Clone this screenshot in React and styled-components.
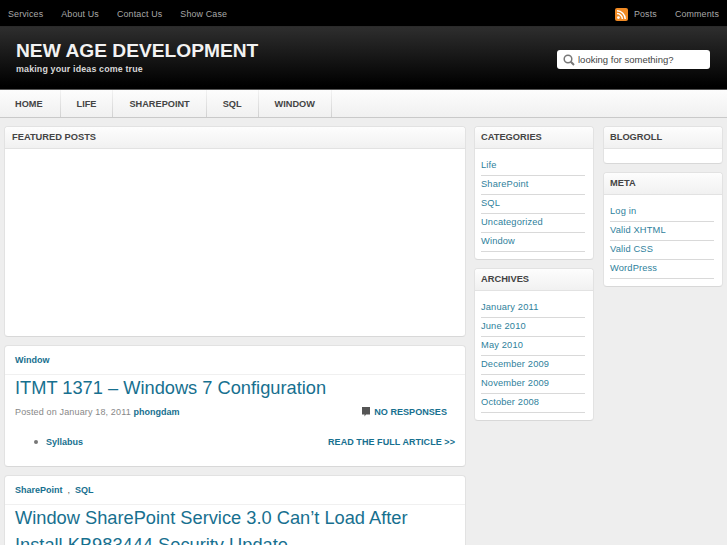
import React from 'react';
import styled, { createGlobalStyle } from 'styled-components';

const Global = createGlobalStyle`
  html, body { margin: 0; padding: 0; height: 545px; overflow: hidden; background: #eeeeee; }
  body { font-family: "Liberation Sans", Arial, sans-serif; font-size: 10px; color: #555; }
  * { box-sizing: border-box; }
`;

const TopBar = styled.div`
  height: 27px; background: #000; border-bottom: 1px solid #2a2a2a;
  display: flex; align-items: center; justify-content: space-between;
  padding: 2px 8px 0 8px; font-size: 8.9px; letter-spacing: 0.15px; color: #aaa;
`;
const TopGroup = styled.div`display: flex; align-items: center; gap: 18px;`;
const TopLink = styled.span`color: #a8a8a8;`;
const RssWrap = styled.span`display: flex; align-items: center; gap: 6px;`;

const Header = styled.header`
  height: 63px; background: linear-gradient(#2e2e2e, #000 95%);
  border-bottom: 1px solid #555;
  display: flex; align-items: flex-start; justify-content: space-between;
  padding: 13px 17px 0 16px;
`;
const Brand = styled.div`display: flex; flex-direction: column;`;
const SiteTitle = styled.div`font-size: 19.2px; line-height: 22px; font-weight: bold; color: #f2f2f2;`;
const Tagline = styled.div`font-size: 8.9px; line-height: 14px; font-weight: bold; color: #d8d8d8; letter-spacing: 0.15px;`;
const Search = styled.div`
  width: 153px; height: 19px; margin-top: 10px; background: #fff; border-radius: 3px;
  display: flex; align-items: center; gap: 3px; padding-left: 6px; font-size: 9.5px; color: #444;
`;

const Nav = styled.nav`
  height: 28px; background: linear-gradient(#fdfdfd, #f0f0f0);
  border-bottom: 1px solid #c9c9c9; display: flex;
`;
const NavItem = styled.div`
  height: 27px; padding: 0 ${p => p.$right || 16}px 0 ${p => p.$left || 16}px;
  border-right: 1px solid; border-image: linear-gradient(#f4f4f4, #d0d0d0) 1;
  display: flex; align-items: center; font-size: 9.2px; font-weight: bold; color: #444;
`;

const Main = styled.main`
  display: grid; grid-template-columns: 462px 120px 121px; column-gap: 8px;
  padding: 8px 4px 0; align-items: start;
`;
const Column = styled.div`
  display: flex; flex-direction: column; gap: 8px;
  margin-left: ${p => (p.$inset ? '1px' : '0')};
`;
const Card = styled.section`
  background: #fff; border: 1px solid #e2e2e2; border-bottom-color: #d8d8d8; border-radius: 4px; overflow: hidden;
`;
const CardHead = styled.div`
  height: 22px; padding: 0 ${p => p.$pad || 6}px 1px; display: flex; align-items: center;
  background: linear-gradient(#fdfdfd, #f1f1f1); border-bottom: 1px solid #e2e2e2;
  font-size: 9.3px; font-weight: bold; color: #444;
`;
const Featured = styled.div`height: 187px;`;
const WidgetList = styled.ul`list-style: none; margin: 0; padding: 8px 8px 7px 6px;`;
const WidgetItem = styled.li`
  height: 19px; padding-bottom: 2px; border-bottom: 1px solid #d9d9d9; display: flex; align-items: center;
  font-size: 9.3px; letter-spacing: 0.15px; color: #2f7f9c;
`;
const EmptyBody = styled.div`height: 14px;`;

const PostCats = styled.div`
  height: 29px; padding: 0 10px; border-bottom: 1px solid #f0f0f0; display: flex; align-items: center;
  gap: 5px; font-size: 9px; font-weight: bold; color: #17708f;
`;
const Comma = styled.span`color: #555; font-weight: normal;`;
const PostBody = styled.div`padding: 0 10px;`;
const PostTitle = styled.h2`
  margin: -1px 0 0; font-size: 18.25px; line-height: 27px; font-weight: normal; color: #17708f;
`;
const MetaRow = styled.div`
  display: flex; justify-content: space-between; align-items: center;
  margin-top: 4px; height: 14px; padding-right: 8px; font-size: 9px; letter-spacing: 0.15px; color: #888;
`;
const Author = styled.b`color: #17708f; letter-spacing: 0;`;
const Responses = styled.span`display: flex; align-items: center; gap: 4px; font-weight: bold; color: #17708f; letter-spacing: 0; font-size: 9.1px;`;
const ExcerptRow = styled.div`
  display: flex; justify-content: space-between; align-items: center;
  margin-top: 16px; height: 14px; font-size: 9px; font-weight: bold; color: #17708f;
`;
const Excerpt = styled.ul`list-style: none; margin: 0; padding: 0 0 0 19px;`;
const ExcerptItem = styled.li`display: flex; align-items: center; gap: 8px;`;
const Dot = styled.span`width: 4px; height: 4px; border-radius: 50%; background: #777;`;
const ReadMore = styled.span`letter-spacing: 0.06px;`;
const PostFoot = styled.div`height: 17px;`;

const Rss = () => (
  <svg width="13" height="13" viewBox="0 0 13 13">
    <rect width="13" height="13" rx="2" fill="#f08a24" />
    <circle cx="3.4" cy="9.6" r="1.4" fill="#fff" />
    <path d="M2 5.6a5.4 5.4 0 0 1 5.400 5.400M2 2.800A8.200 8.200 0 0 1 10.200 11" fill="none" stroke="#fff" strokeWidth="1.5" />
  </svg>
);
const Magnifier = () => (
  <svg width="12" height="12" viewBox="0 0 12 12">
    <circle cx="5" cy="5" r="3.8" fill="none" stroke="#777" strokeWidth="1.5" />
    <path d="M7.800 7.800 11 11" stroke="#777" strokeWidth="2" />
  </svg>
);
const Bubble = () => (
  <svg width="8" height="10" viewBox="0 0 8 10">
    <path d="M0 0h8v7.500H4L2.500 9.500V7.500H0z" fill="#555" />
  </svg>
);

const Widget = ({ title, items }) => (
  <Card>
    <CardHead>{title}</CardHead>
    {items.length ? (
      <WidgetList>{items.map(i => <WidgetItem key={i}>{i}</WidgetItem>)}</WidgetList>
    ) : <EmptyBody />}
  </Card>
);

export default function App() {
  return (
    <>
      <Global />
      <TopBar>
        <TopGroup>
          {['Services', 'About Us', 'Contact Us', 'Show Case'].map(t => <TopLink key={t}>{t}</TopLink>)}
        </TopGroup>
        <TopGroup>
          <RssWrap><Rss /><TopLink>Posts</TopLink></RssWrap>
          <TopLink>Comments</TopLink>
        </TopGroup>
      </TopBar>
      <Header>
        <Brand>
          <SiteTitle>NEW AGE DEVELOPMENT</SiteTitle>
          <Tagline>making your ideas come true</Tagline>
        </Brand>
        <Search><Magnifier />looking for something?</Search>
      </Header>
      <Nav>
        <NavItem $left={15} $right={17}>HOME</NavItem>
        <NavItem>LIFE</NavItem>
        <NavItem>SHAREPOINT</NavItem>
        <NavItem>SQL</NavItem>
        <NavItem>WINDOW</NavItem>
      </Nav>
      <Main>
        <Column>
          <Card>
            <CardHead $pad={7}>FEATURED POSTS</CardHead>
            <Featured />
          </Card>
          <Card>
            <PostCats>Window</PostCats>
            <PostBody>
              <PostTitle>ITMT 1371 – Windows 7 Configuration</PostTitle>
              <MetaRow>
                <span>Posted on January 18, 2011 <Author>phongdam</Author></span>
                <Responses><Bubble />NO RESPONSES</Responses>
              </MetaRow>
              <ExcerptRow>
                <Excerpt><ExcerptItem><Dot />Syllabus</ExcerptItem></Excerpt>
                <ReadMore>READ THE FULL ARTICLE &gt;&gt;</ReadMore>
              </ExcerptRow>
              <PostFoot />
            </PostBody>
          </Card>
          <Card>
            <PostCats>SharePoint <Comma>,</Comma> SQL</PostCats>
            <PostBody>
              <PostTitle>Window SharePoint Service 3.0 Can’t Load After Install KB983444 Security Update</PostTitle>
            </PostBody>
          </Card>
        </Column>
        <Column>
          <Widget title="CATEGORIES" items={['Life', 'SharePoint', 'SQL', 'Uncategorized', 'Window']} />
          <Widget title="ARCHIVES" items={['January 2011', 'June 2010', 'May 2010', 'December 2009', 'November 2009', 'October 2008']} />
        </Column>
        <Column $inset>
          <Widget title="BLOGROLL" items={[]} />
          <Widget title="META" items={['Log in', 'Valid XHTML', 'Valid CSS', 'WordPress']} />
        </Column>
      </Main>
    </>
  );
}
